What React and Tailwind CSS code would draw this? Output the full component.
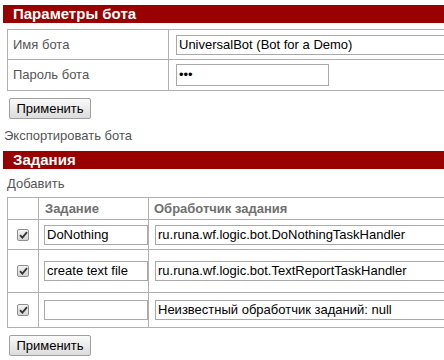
const font = { fontFamily: '"Liberation Sans", Arial, sans-serif' };

const Check = () => (
  <span className="flex h-[12px] w-[12px] items-center justify-center rounded-[2px] border border-[#8f8f8f] bg-gradient-to-b from-[#f4f4f4] to-[#d4d4d4]">
    <svg width="9" height="8" viewBox="0 0 9 8">
      <path d="M1 4.2 L3.4 6.6 L8 1.2" fill="none" stroke="#333" strokeWidth="1.8" />
    </svg>
  </span>
);

const Input = ({ value, className }) => (
  <div className={`flex items-center border border-[#a9a9a9] bg-white pl-[2px] text-[13px] text-black ${className}`}>
    {value}
  </div>
);

const Button = () => (
  <div className="flex h-[21px] w-[82px] items-center justify-center rounded-[2px] border border-[#a0a0a0] bg-gradient-to-b from-[#fafafa] to-[#dcdcdc] text-[13px] text-black">
    Применить
  </div>
);

const Bar = ({ title }) => (
  <div className="h-[18px] bg-[#990000] pl-[10px] text-[15px] font-bold leading-[18px] text-white">{title}</div>
);

const tasks = [
  { name: 'DoNothing', handler: 'ru.runa.wf.logic.bot.DoNothingTaskHandler', h: 'h-[30px]' },
  { name: 'create text file', handler: 'ru.runa.wf.logic.bot.TextReportTaskHandler', h: 'h-[43px]' },
  { name: '', handler: 'Неизвестный обработчик заданий: null', h: 'h-[35px]' },
];

export default function App() {
  return (
    <div className="h-[360px] w-[444px] overflow-hidden bg-white text-[13px]" style={font}>
      <div className="w-[480px] pl-[3px] pt-[5px]">
        <Bar title="Параметры бота" />

        {/* параметры */}
        <div className="ml-[4px] mt-[6px] border border-[#b0b0b0] text-[#555]">
          <div className="grid h-[29px] grid-cols-[161px_1fr]">
            <div className="flex items-center border-r border-[#b0b0b0] pl-[5px]">Имя бота</div>
            <div className="flex items-center pl-[7px]">
              <Input value="UniversalBot (Bot for a Demo)" className="h-[20px] w-[300px]" />
            </div>
          </div>
          <div className="grid h-[31px] grid-cols-[161px_1fr] border-t border-[#b0b0b0]">
            <div className="flex items-center border-r border-[#b0b0b0] pl-[5px]">Пароль бота</div>
            <div className="flex items-center pl-[7px]">
              <Input value="•••" className="h-[22px] w-[153px] text-[11px]" />
            </div>
          </div>
        </div>

        <div className="ml-[6px] mt-[7px]">
          <Button />
        </div>

        <div className="mt-[10px] pl-[1px] text-[13px] leading-[14px] text-[#555]">Экспортировать бота</div>

        <div className="mt-[8px]">
          <Bar title="Задания" />
        </div>

        <div className="mt-[8px] pl-[4px] text-[13px] leading-[14px] text-[#555]">Добавить</div>

        {/* задания */}
        <div className="ml-[4px] mt-[6px] border border-[#b0b0b0]">
          <div className="grid h-[21px] grid-cols-[31px_110px_1fr] font-bold text-[#707070]">
            <div className="border-r border-[#b0b0b0]" />
            <div className="flex items-center border-r border-[#b0b0b0] pl-[6px]">Задание</div>
            <div className="flex items-center pl-[5px]">Обработчик задания</div>
          </div>
          {tasks.map((t, i) => (
            <div key={i} className={`grid grid-cols-[31px_110px_1fr] border-t border-[#b0b0b0] ${t.h}`}>
              <div className="flex items-center justify-center border-r border-[#b0b0b0]">
                <Check />
              </div>
              <div className="flex items-center border-r border-[#b0b0b0] pl-[5px]">
                <Input value={t.name} className="h-[20px] w-[104px]" />
              </div>
              <div className="flex items-center pl-[6px]">
                <Input value={t.handler} className="h-[20px] w-[300px]" />
              </div>
            </div>
          ))}
        </div>

        <div className="ml-[6px] mt-[7px]">
          <Button />
        </div>
      </div>
    </div>
  );
}
